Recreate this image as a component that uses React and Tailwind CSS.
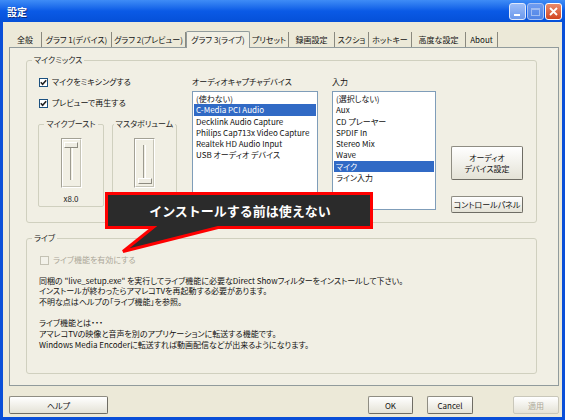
import React from 'react';

const FONT = "font-['Noto_Sans_CJK_JP',_'Noto_Sans',_sans-serif] [font-feature-settings:'palt']";

function Check({ checked, disabled }) {
  return (
    <span
      className={`w-[9px] h-[9px] border flex items-center justify-center shrink-0 ${
        disabled ? 'border-[#c4c2b4] bg-[#f3f2ea]' : 'border-[#1c5180] bg-white'
      }`}
    >
      {checked && (
        <svg width="7" height="7" viewBox="0 0 7 7">
          <path d="M0.8 3.3 L2.6 5.2 L6.2 1.2" stroke="#222" strokeWidth="1.6" fill="none" />
        </svg>
      )}
    </span>
  );
}

function Group({ label, className, children }) {
  return (
    <div className={`relative border border-[#d0d0bf] rounded-[3px] ${className}`}>
      <span className="absolute top-[-7px] left-[5px] px-[2px] bg-[#f1efe4] text-[8px] leading-[12px] text-[#222] whitespace-nowrap">
        {label}
      </span>
      {children}
    </div>
  );
}

function SubGroup({ label, className, children }) {
  return (
    <div className={`relative border border-[#d0d0bf] rounded-[2px] flex flex-col items-center ${className}`}>
      <span className="absolute top-[-7px] left-0 right-0 mx-auto w-fit px-[2px] bg-[#f1efe4] text-[8px] leading-[12px] text-[#222] whitespace-nowrap">
        {label}
      </span>
      {children}
    </div>
  );
}

function Thumb() {
  return <div className="w-[14px] h-[6px] shrink-0 border border-t-white border-l-white border-b-[#8c8a7f] border-r-[#8c8a7f] bg-[#eeece2]" />;
}

function Track() {
  return <div className="w-[3px] flex-1 border-l border-l-[#9d9b90] border-r border-r-white" />;
}

function Slider({ top }) {
  return (
    <div className="mt-[13px] w-[21px] h-[50px] border border-t-[#a3a195] border-l-[#a3a195] border-b-white border-r-white">
      <div className="w-full h-full border border-t-white border-l-white border-b-[#c5c3b6] border-r-[#c5c3b6] flex flex-col items-center py-[2px]">
        {top ? (
          <>
            <Thumb />
            <Track />
            <div className="h-[4px]" />
          </>
        ) : (
          <>
            <div className="h-[3px]" />
            <Track />
            <Thumb />
          </>
        )}
      </div>
    </div>
  );
}

function ListBox({ items, selected, className }) {
  return (
    <div className={`bg-white border border-[#7f9db9] p-[1px] overflow-hidden ${className}`}>
      {items.map((it, i) => (
        <div
          key={it}
          className={`h-[11.3px] leading-[11.3px] text-[8px] pl-[2px] whitespace-nowrap ${
            i === selected ? 'bg-[#316ac5] text-white' : 'text-[#111]'
          }`}
        >
          {it}
        </div>
      ))}
    </div>
  );
}

function Button({ children, className, disabled }) {
  return (
    <div
      className={`flex items-center justify-center text-center text-[8px] leading-[11px] whitespace-nowrap rounded-[2px] border bg-gradient-to-b from-white to-[#e4e2d6] ${
        disabled ? 'border-[#c9c7ba] text-[#aca899]' : 'border-[#8f8d83] border-b-[#6e6c64] border-r-[#6e6c64] text-[#111]'
      } ${className}`}
    >
      {children}
    </div>
  );
}

const tabs = [
  { t: '全般', w: 'w-[33px]' },
  { t: 'グラフ 1(デバイス)', w: 'w-[70px]' },
  { t: 'グラフ 2(プレビュー)', w: 'w-[74px]' },
  { t: 'グラフ 3(ライブ)', w: 'w-[64px]', sel: true },
  { t: 'プリセット', w: 'w-[39px]' },
  { t: '録画設定', w: 'w-[46px]' },
  { t: 'スクショ', w: 'w-[34px]' },
  { t: 'ホットキー', w: 'w-[43px]' },
  { t: '高度な設定', w: 'w-[54px]' },
  { t: 'About', w: 'w-[32px]' },
];

const devices = ['(使わない)', 'C-Media PCI Audio', 'Decklink Audio Capture', 'Philips Cap713x Video Capture', 'Realtek HD Audio Input', 'USB オーディオ デバイス'];
const inputs = ['(選択しない)', 'Aux', 'CD プレーヤー', 'SPDIF In', 'Stereo Mix', 'Wave', 'マイク', 'ライン入力'];

const liveText = [
  '同梱の "live_setup.exe" を実行してライブ機能に必要なDirect Showフィルターをインストールして下さい。',
  'インストールが終わったらアマレコTVを再起動する必要があります。',
  '不明な点はヘルプの「ライブ機能」を参照。',
  '',
  'ライブ機能とは・・・',
  'アマレコTVの映像と音声を別のアプリケーションに転送する機能です。',
  'Windows Media Encoderに転送すれば動画配信などが出来るようになります。',
];

export default function App() {
  return (
    <div className={`relative w-[565px] h-[420px] overflow-hidden flex flex-col bg-[#0a4fd8] ${FONT}`}>
      {/* title bar */}
      <div className="h-[22px] shrink-0 flex items-center pl-[7px] pr-[3px] bg-gradient-to-b from-[#3f8cf6] via-[#0a5ae6] to-[#0550d8]">
        <span className="text-white text-[10px] font-bold [text-shadow:1px_1px_0_#0a2a80]">設定</span>
        <div className="ml-auto flex gap-[1px] mt-[1px]">
          <div className="w-[17px] h-[17px] rounded-[3px] border border-[#dfe8fb] bg-gradient-to-b from-[#9dbdf8] to-[#6b98ec] flex items-end pl-[4px] pb-[3px]">
            <div className="w-[6px] h-[2px] bg-white" />
          </div>
          <div className="w-[17px] h-[17px] rounded-[3px] border border-[#a9c2f3] bg-gradient-to-b from-[#6f9cf0] to-[#4f84e6] flex items-center justify-center">
            <div className="w-[9px] h-[8px] border border-[#9fbcf2] border-t-2" />
          </div>
          <div className="w-[17px] h-[17px] rounded-[3px] border border-white bg-gradient-to-b from-[#e88a6a] to-[#d2441f] flex items-center justify-center">
            <svg width="9" height="9" viewBox="0 0 9 9">
              <path d="M1 1 L8 8 M8 1 L1 8" stroke="white" strokeWidth="1.8" />
            </svg>
          </div>
        </div>
      </div>

      {/* body */}
      <div className="flex-1 mx-[3px] mb-[3px] bg-[#ece9d8] pl-[6px] pr-[3px] pt-[8px] flex flex-col">
        {/* tabs */}
        <div className="h-[17px] flex items-end relative z-10">
          {tabs.map((tab) =>
            tab.sel ? (
              <div
                key={tab.t}
                className={`${tab.w} h-[17px] -mb-px bg-[#f1efe4] border-t border-x border-[#919b9c] rounded-t-[2px] flex items-center justify-center text-[8px] text-[#111] whitespace-nowrap`}
              >
                {tab.t}
              </div>
            ) : (
              <div
                key={tab.t}
                className={`${tab.w} h-[15px] border-r border-[#8a897f] flex items-center justify-center text-[8px] text-[#111] whitespace-nowrap`}
              >
                {tab.t}
              </div>
            )
          )}
        </div>

        {/* panel */}
        <div className="h-[339px] shrink-0 border border-[#919b9c] bg-[#f1efe4] pl-[16px] pt-[12px] flex flex-col">
          <Group label="マイクミックス" className="w-[511px] h-[163px] flex pl-[11px] pt-[15px]">
            {/* col A */}
            <div className="w-[139px] flex flex-col">
              <div className="h-[12px] flex items-center gap-[4px] pl-[1px] text-[8px] text-[#111]">
                <Check checked />
                マイクをミキシングする
              </div>
              <div className="h-[12px] mt-[9px] flex items-center gap-[4px] pl-[1px] text-[8px] text-[#111]">
                <Check checked />
                プレビューで再生する
              </div>
              <div className="mt-[15px] flex gap-[8px]">
                <SubGroup label="マイクブースト" className="w-[66px] h-[83px]">
                  <Slider top />
                  <span className="mt-[5px] text-[8px] leading-[11px] text-[#222]">x8.0</span>
                </SubGroup>
                <SubGroup label="マスタボリューム" className="w-[65px] h-[83px]">
                  <Slider />
                </SubGroup>
              </div>
            </div>
            {/* col B */}
            <div className="ml-[15px] w-[126px] flex flex-col">
              <div className="h-[12px] leading-[12px] text-[8px] text-[#111] whitespace-nowrap">オーディオキャプチャデバイス</div>
              <ListBox items={devices} selected={1} className="mt-[3px] h-[119px]" />
            </div>
            {/* col C */}
            <div className="ml-[14px] w-[104px] flex flex-col">
              <div className="h-[12px] leading-[12px] text-[8px] text-[#111]">入力</div>
              <ListBox items={inputs} selected={6} className="mt-[3px] h-[119px]" />
            </div>
            {/* col D */}
            <div className="ml-[15px] w-[72px] flex flex-col">
              <Button className="mt-[70px] h-[34px]">
                オーディオ
                <br />
                デバイス設定
              </Button>
              <Button className="mt-[16px] h-[17px]">コントロールパネル</Button>
            </div>
          </Group>

          <Group label="ライブ" className="mt-[15px] w-[511px] h-[136px] pl-[12px] pt-[15px] flex flex-col">
            <div className="h-[12px] flex items-center gap-[4px] pl-[1px] text-[8px] text-[#aca899]">
              <Check disabled />
              ライブ機能を有効にする
            </div>
            <div className="mt-[9.5px] text-[8px] leading-[10.7px] text-[#111]">
              {liveText.map((l, i) => (
                <div key={i} className="h-[10.7px] whitespace-nowrap">
                  {l}
                </div>
              ))}
            </div>
          </Group>
        </div>

        {/* buttons */}
        <div className="mt-[10px] h-[18px] flex">
          <Button className="w-[99px] h-[18px]">ヘルプ</Button>
          <Button className="ml-auto w-[45px] h-[18px]">OK</Button>
          <Button className="ml-[14px] w-[46px] h-[18px]">Cancel</Button>
          <Button disabled className="ml-[40px] w-[46px] h-[18px]">
            適用
          </Button>
        </div>
      </div>

      {/* callout */}
      <div className="absolute left-[105px] top-[192px] w-[270px] h-[62px]">
        <svg className="absolute inset-0" width="270" height="62" viewBox="0 0 270 62">
          <path
            d="M1.5 1.5 H266.5 V35.5 H113 L18 59.5 L48 35.5 H1.5 Z"
            fill="#2b2b2b"
            stroke="#ff0000"
            strokeWidth="3"
            strokeLinejoin="miter"
          />
        </svg>
        <div className="relative h-[37px] flex items-center justify-center text-white text-[13px] font-bold [font-feature-settings:normal]">
          インストールする前は使えない
        </div>
      </div>
    </div>
  );
}
